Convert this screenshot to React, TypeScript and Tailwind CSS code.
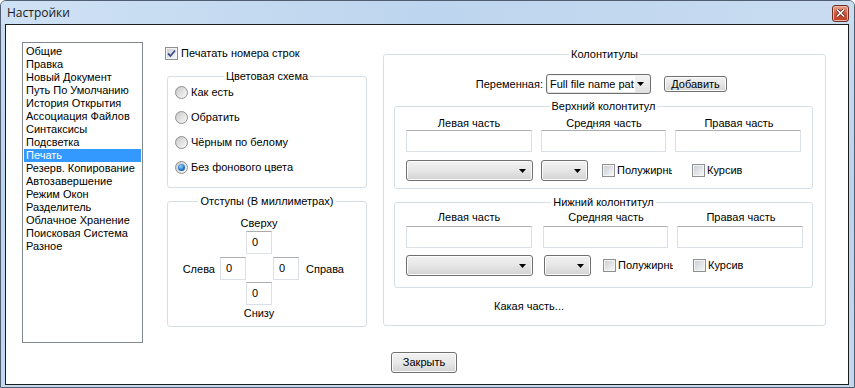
import React from "react";

const F = "[font-family:'Liberation_Sans',Arial,sans-serif]";

function Check({ checked = false }: { checked?: boolean }) {
  return (
    <span className="flex h-[13px] w-[13px] shrink-0 items-center justify-center border border-[#8e8f8f] bg-white">
      <span className="flex h-[11px] w-[11px] items-center justify-center border border-[#f4f4f4] bg-gradient-to-br from-[#cbcfd5] to-[#f6f6f6]">
        {checked && (
          <svg width="9" height="9" viewBox="0 0 9 9">
            <path d="M1 4.5 L3.5 7 L8 1.5" fill="none" stroke="#3c4f8f" strokeWidth="1.8" />
          </svg>
        )}
      </span>
    </span>
  );
}

function Radio({ checked = false }: { checked?: boolean }) {
  return (
    <span className="flex h-[13px] w-[13px] shrink-0 items-center justify-center rounded-full border border-[#8e8f8f] bg-gradient-to-br from-[#c8c8c8] to-[#fbfbfb]">
      {checked && (
        <span className="h-[7px] w-[7px] rounded-full bg-[radial-gradient(circle_at_40%_35%,#8fd6ff,#1d6fc2_60%,#0d3f86)]" />
      )}
    </span>
  );
}

function Arrow() {
  return (
    <svg width="7" height="4" viewBox="0 0 7 4" className="shrink-0">
      <path d="M0 0 H7 L3.5 4 Z" fill="#000" />
    </svg>
  );
}

function Combo({ w }: { w: string }) {
  return (
    <div
      className={`${w} flex h-[21px] shrink-0 items-center justify-end rounded-[3px] border border-[#707070] bg-gradient-to-b from-[#f2f2f2] via-[#e6e6e6] to-[#d2d2d2] pr-[6px] shadow-[inset_0_0_0_1px_#fcfcfc]`}
    >
      <Arrow />
    </div>
  );
}

function TextBox({ w, h, value }: { w: string; h: string; value?: string }) {
  return (
    <div
      className={`${w} ${h} shrink-0 border border-[#dbdfe6] border-t-[#abadb3] bg-white pl-[5px] pt-[4px] leading-[13px]`}
    >
      {value}
    </div>
  );
}

function Group({
  title,
  className,
  children,
}: {
  title: string;
  className: string;
  children: React.ReactNode;
}) {
  return (
    <fieldset className={`${className} rounded-[3px] border border-[#d5dfe5]`}>
      <legend className="mx-auto px-[2px] leading-[13px]">{title}</legend>
      {children}
    </fieldset>
  );
}

function HeaderFooter({
  title,
  className,
  labelPt,
  inputMt,
  comboMt,
  midGap,
  combo2Ml,
  combo2W,
  chkMl,
}: {
  title: string;
  className: string;
  labelPt: string;
  inputMt: string;
  comboMt: string;
  midGap: string;
  combo2Ml: string;
  combo2W: string;
  chkMl: string;
}) {
  return (
    <Group title={title} className={className}>
      <div className={`flex flex-col pl-[11px] ${labelPt}`}>
        <div className="flex leading-[13px]">
          <div className="w-[126px] text-center">Левая часть</div>
          <div className={`w-[126px] text-center ${midGap}`}>Средняя часть</div>
          <div className="ml-[9px] w-[126px] text-center">Правая часть</div>
        </div>
        <div className={`flex ${inputMt}`}>
          <TextBox w="w-[126px]" h="h-[22px]" />
          <div className={midGap}>
            <TextBox w="w-[125px]" h="h-[22px]" />
          </div>
          <div className="ml-[9px]">
            <TextBox w="w-[126px]" h="h-[22px]" />
          </div>
        </div>
        <div className={`flex items-center ${comboMt}`}>
          <Combo w="w-[127px]" />
          <div className={combo2Ml}>
            <Combo w={combo2W} />
          </div>
          <div className={`${chkMl} flex w-[70px] items-center overflow-hidden whitespace-nowrap`}>
            <Check />
            <span className="ml-[2px] leading-[13px]">Полужирный</span>
          </div>
          <div className="ml-[20px] flex items-center whitespace-nowrap">
            <Check />
            <span className="ml-[2px] leading-[13px]">Курсив</span>
          </div>
        </div>
      </div>
    </Group>
  );
}

const items = [
  "Общие",
  "Правка",
  "Новый Документ",
  "Путь По Умолчанию",
  "История Открытия",
  "Ассоциация Файлов",
  "Синтаксисы",
  "Подсветка",
  "Печать",
  "Резерв. Копирование",
  "Автозавершение",
  "Режим Окон",
  "Разделитель",
  "Облачное Хранение",
  "Поисковая Система",
  "Разное",
];

export default function App() {
  return (
    <div
      className={`${F} flex h-[388px] w-[855px] flex-col overflow-hidden rounded-t-[6px] border border-[#4f5e70] bg-gradient-to-b from-[#c9dcf1] via-[#bcd3ec] to-[#c3d8ee] text-[11px] text-black`}
    >
      {/* title bar */}
      <div className="flex h-[23px] shrink-0 items-center bg-gradient-to-r from-[#cfe1f4] via-[#bdd5ee] to-[#c9dcf1] pl-[6px] pr-[5px]">
        <span className="text-[12px] text-[#1a1a1a] [font-family:'Open_Sans','Noto_Sans',sans-serif]">
          Настройки
        </span>
        <div className="ml-auto mt-[1px] flex h-[17px] w-[17px] items-center justify-center rounded-[3px] border border-[#6e2e22] bg-gradient-to-b from-[#e9a593] via-[#d0533a] to-[#c23c22] shadow-[inset_0_0_0_1px_#f0b7a8]">
          <svg width="9" height="8" viewBox="0 0 9 8">
            <path d="M1 0.5 L8 7.5 M8 0.5 L1 7.5" stroke="#4a1a10" strokeWidth="3" />
            <path d="M1 0.5 L8 7.5 M8 0.5 L1 7.5" stroke="#ffffff" strokeWidth="1.6" />
          </svg>
        </div>
      </div>

      {/* client area */}
      <div className="ml-[4px] flex h-[361px] w-[844px] shrink-0 flex-col border border-[#1c1c1c] bg-white">
        <div className="flex items-start pl-[16px] pt-[17px]">
          {/* list */}
          <div className="h-[301px] w-[121px] shrink-0 border border-[#828790] bg-white px-[1px] pt-[2px]">
            {items.map((it) => (
              <div
                key={it}
                className={`h-[13px] whitespace-nowrap pl-[2px] leading-[13px] ${
                  it === "Печать" ? "bg-[#3399ff] text-white" : ""
                }`}
              >
                {it}
              </div>
            ))}
          </div>

          {/* middle column */}
          <div className="ml-[22px] mt-[5px] flex w-[202px] shrink-0 flex-col">
            <div className="flex h-[13px] items-center">
              <Check checked />
              <span className="ml-[3px] leading-[13px]">Печатать номера строк</span>
            </div>
            <Group title="Цветовая схема" className="ml-[2px] mt-[10px] h-[118px] w-[200px]">
              <div className="flex flex-col gap-[12px] pl-[7px] pt-[3px]">
                {[
                  ["Как есть", false],
                  ["Обратить", false],
                  ["Чёрным по белому", false],
                  ["Без фонового цвета", true],
                ].map(([t, c]) => (
                  <div key={t as string} className="flex h-[13px] items-center">
                    <Radio checked={c as boolean} />
                    <span className="ml-[3px] leading-[13px]">{t as string}</span>
                  </div>
                ))}
              </div>
            </Group>
            <Group title="Отступы (В миллиметрах)" className="ml-[2px] mt-[7px] h-[132px] w-[200px]">
              <div className="flex flex-col pt-[9px]">
                <div className="ml-[78px] flex w-[26px] justify-center whitespace-nowrap leading-[13px]">
                  Сверху
                </div>
                <div className="ml-[78px] mt-[1px]">
                  <TextBox w="w-[26px]" h="h-[23px]" value="0" />
                </div>
                <div className="mt-[3px] flex items-center">
                  <div className="w-[47px] pt-[2px] text-right leading-[13px]">Слева</div>
                  <div className="ml-[5px]">
                    <TextBox w="w-[26px]" h="h-[23px]" value="0" />
                  </div>
                  <div className="ml-[27px]">
                    <TextBox w="w-[26px]" h="h-[23px]" value="0" />
                  </div>
                  <div className="ml-[7px] pt-[2px] leading-[13px]">Справа</div>
                </div>
                <div className="ml-[78px] mt-[2px]">
                  <TextBox w="w-[26px]" h="h-[23px]" value="0" />
                </div>
                <div className="ml-[78px] mt-[2px] flex w-[26px] justify-center whitespace-nowrap leading-[13px]">
                  Снизу
                </div>
              </div>
            </Group>
          </div>

          {/* right group */}
          <Group title="Колонтитулы" className="ml-[16px] mt-[6px] h-[278px] w-[443px] shrink-0">
            <div className="flex flex-col">
              <div className="mt-[13px] flex items-center">
                <div className="w-[159px] text-right leading-[13px]">Переменная:</div>
                <div className="ml-[3px] flex h-[20px] w-[105px] items-center rounded-[3px] border border-[#707070] bg-gradient-to-b from-[#f4f4f4] to-[#e0e0e0] pr-[6px]">
                  <div className="ml-[1px] flex h-[16px] w-[87px] items-center whitespace-nowrap bg-white pl-[2px] leading-[13px]">
                    Full file name pat
                  </div>
                  <div className="ml-auto">
                    <Arrow />
                  </div>
                </div>
                <div className="ml-[13px] flex h-[16px] w-[63px] items-center justify-center rounded-[3px] border border-[#707070] bg-gradient-to-b from-[#f2f2f2] via-[#e6e6e6] to-[#d4d4d4] leading-[13px] shadow-[inset_0_0_0_1px_#fcfcfc]">
                  Добавить
                </div>
              </div>
              <HeaderFooter
                title="Верхний колонтитул"
                className="ml-[10px] mt-[6px] h-[89px] w-[419px]"
                labelPt="pt-[4px]"
                inputMt="mt-0"
                comboMt="mt-[8px]"
                midGap="ml-[9px]"
                combo2Ml="ml-[8px]"
                combo2W="w-[47px]"
                chkMl="ml-[14px]"
              />
              <HeaderFooter
                title="Нижний колонтитул"
                className="ml-[10px] mt-[7px] h-[92px] w-[419px]"
                labelPt="pt-[2px]"
                inputMt="mt-[2px]"
                comboMt="mt-[7px]"
                midGap="ml-[11px]"
                combo2Ml="ml-[11px]"
                combo2W="w-[47px]"
                chkMl="ml-[12px]"
              />
              <div className="ml-[110px] mt-[12px] leading-[13px]">Какая часть...</div>
            </div>
          </Group>
        </div>

        <div className="ml-[385px] mt-[9px] flex h-[21px] w-[66px] items-center justify-center rounded-[3px] border border-[#707070] bg-gradient-to-b from-[#f2f2f2] via-[#e8e8e8] to-[#d4d4d4] leading-[13px] shadow-[inset_0_0_0_1px_#fcfcfc]">
          Закрыть
        </div>
      </div>
    </div>
  );
}
